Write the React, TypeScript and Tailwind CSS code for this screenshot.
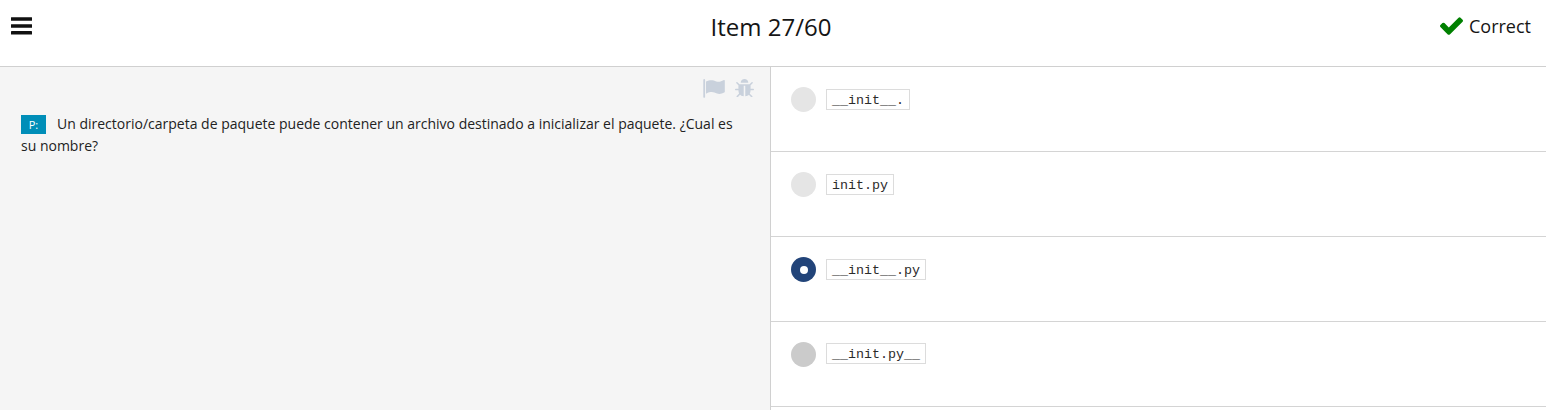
import React from "react";

type Option = { text: string; state: "idle" | "selected" | "hover" };

const options: Option[] = [
  { text: "__init__.", state: "idle" },
  { text: "init.py", state: "idle" },
  { text: "__init__.py", state: "selected" },
  { text: "__init.py__", state: "hover" },
];

function Radio({ state }: { state: Option["state"] }) {
  const color =
    state === "selected" ? "bg-[#224479]" : state === "hover" ? "bg-[#cbcbcb]" : "bg-[#e5e5e5]";
  return (
    <span className={`flex size-[25px] shrink-0 items-center justify-center rounded-full ${color}`}>
      {state === "selected" && <span className="size-2 rounded-full bg-white" />}
    </span>
  );
}

function MenuIcon() {
  return (
    <svg viewBox="0 0 21 18" className="h-[18px] w-[21px]" fill="#111111" aria-hidden="true">
      <rect y="0.3" width="21" height="3.4" rx="0.3" />
      <rect y="7.300" width="21" height="3.400" rx="0.3" />
      <rect y="14.100" width="21" height="3.400" rx="0.3" />
    </svg>
  );
}

function FlagIcon() {
  return (
    <svg viewBox="0 0 22 19" className="h-[19px] w-[22px]" fill="currentColor" aria-hidden="true">
      <path d="M.3 1Q.3 0 1.200 0t.9 1V18q0 .7-.6.7H.9q-.6 0-.6-.7z" />
      <path d="M3 2.600C6 1 8.600.8 10.800 1.600c2.500 1 4.700 1.700 6.700.9 1.200-.4 2.500-1 3.400-1.500.4-.2.900 0 .9.500v11.200c0 .4-.2.600-.6.800-2.200 1.200-4.700 1.900-7.200 1-2-.9-4-1.800-6.500-1.400-1.600.2-3 .8-4.500 1.600z" />
    </svg>
  );
}

function BugIcon() {
  return (
    <svg viewBox="96 64 1600 1536" className="h-[18px] w-[19px]" preserveAspectRatio="none" fill="currentColor" aria-hidden="true">
      <path d="M1696 960q0 26-19 45t-45 19h-224q0 171-67 290l208 209q19 19 19 45t-19 45q-18 19-45 19t-45-19l-198-197q-5 5-15 13t-42 28.500-65 36.500-82 29-97 13v-896h-128v896q-51 0-101.500-13.500t-87-33-66-39-43.500-32.500l-15-14-183 207q-20 21-48 21-24 0-43-16-19-18-20.500-44.500t15.500-46.500l202-227q-58-114-58-274h-224q-26 0-45-19t-19-45 19-45 45-19h224v-294l-173-173q-19-19-19-45t19-45 45-19 45 19l173 173h844l173-173q19-19 45-19t45 19 19 45-19 45l-173 173v294h224q26 0 45 19t19 45zm-480-576h-640q0-133 93.500-226.500t226.500-93.500 226.500 93.500 93.500 226.500z" />
    </svg>
  );
}

function CheckIcon() {
  return (
    <svg viewBox="121 310 1550 1188" className="h-[17.500px] w-[23px]" preserveAspectRatio="none" fill="currentColor" aria-hidden="true">
      <path d="M1671 566q0 40-28 68l-724 724-136 136q-28 28-68 28t-68-28l-136-136-362-362q-28-28-28-68t28-68l136-136q28-28 68-28t68 28l294 295 656-657q28-28 68-28t68 28l136 136q28 28 28 68z" />
    </svg>
  );
}

export default function App() {
  return (
    <div className="flex h-[410px] w-full flex-col overflow-hidden bg-white font-['Open_Sans',sans-serif] text-[#151515]">
      <header className="grid h-[67px] shrink-0 grid-cols-[1fr_auto_1fr] border-b border-[#d0d0d0]">
        <button type="button" aria-label="Menu" className="ml-[11px] mt-[17px] h-[18px] w-[21px]">
          <MenuIcon />
        </button>
        <h1 className="mr-1 mt-[11px] text-[24px] leading-8">Item 27/60</h1>
        <div className="mr-[15px] mt-[14px] flex h-6 items-center justify-end gap-[6px] text-[18px]">
          <span className="text-[#008000]"><CheckIcon /></span>
          <span>Correct</span>
        </div>
      </header>
      <main className="flex min-h-0 flex-1">
        <section className="w-[771px] shrink-0 border-r border-[#d0d0d0] bg-[#f5f5f5]">
          <div className="mt-3 flex h-[19px] justify-end gap-[10px] pr-4 text-[#c9d1dc]">
            <FlagIcon />
            <BugIcon />
          </div>
          <p className="mt-[15px] pl-[21px] pr-5 text-[14px] leading-[22px] text-[#222222]">
            <span className="mr-[11px] inline-block h-[19px] w-[25px] bg-[#008eb8] text-center text-[11px] leading-[19px] text-white">P:</span>
            Un directorio/carpeta de paquete puede contener un archivo destinado a inicializar el paquete. ¿Cual es su nombre?
          </p>
        </section>
        <ul className="flex-1">
          {options.map((o) => (
            <li key={o.text} className="flex h-[85px] items-start gap-[10px] border-b border-[#d4d4d4] pl-5 pt-5">
              <Radio state={o.state} />
              <code className={`h-[21px] border border-[#dcdcdc] px-[5px] font-['Liberation_Mono',monospace] text-[13.333px] leading-[21px] text-[#2b2b2b] ${o.state === "hover" ? "mt-px" : "mt-[2px]"}`}>
                {o.text}
              </code>
            </li>
          ))}
        </ul>
      </main>
    </div>
  );
}
